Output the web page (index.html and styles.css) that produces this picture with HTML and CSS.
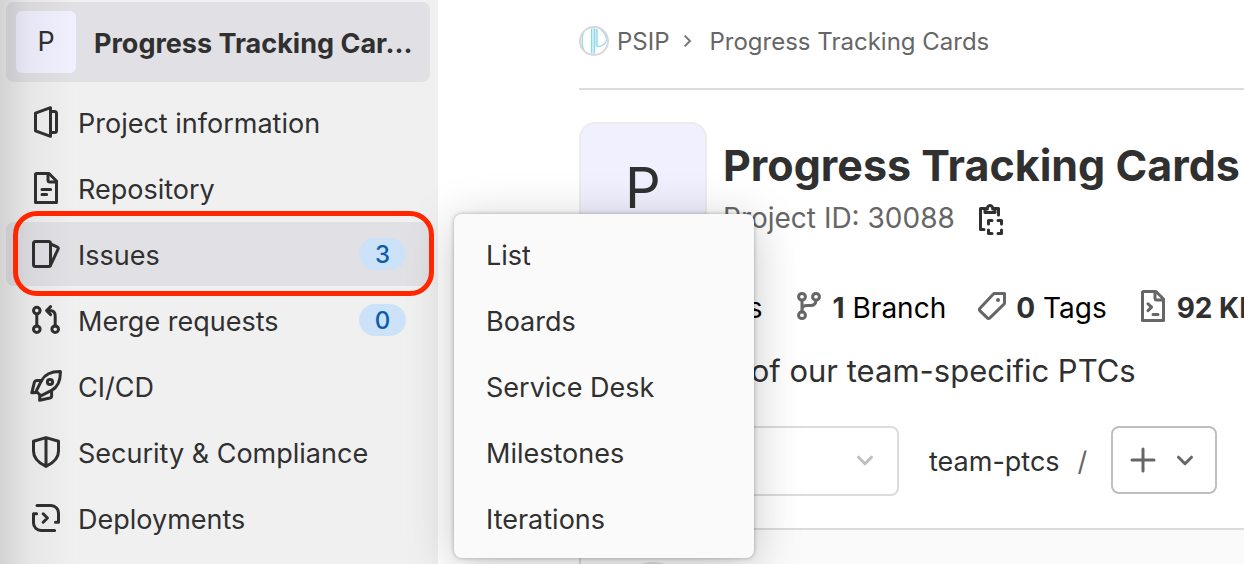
FILE: index.html
```html
<!DOCTYPE html>
<html lang="en">
<head>
<meta charset="utf-8">
<title>Progress Tracking Cards</title>
<link rel="stylesheet" href="styles.css">
</head>
<body>
<div class="layout">
  <aside class="sidebar">
    <a class="context" href="#">
      <span class="context-avatar">P</span>
      <span class="context-name">Progress Tracking Car...</span>
    </a>
    <nav>
      <ul class="nav">
        <li class="nav-item"><a class="nav-link" href="#">
          <svg class="icon" viewBox="0 0 16 16"><path d="M2.75 3.6 10.25.85v14.3L2.75 12.4z"/><path d="M10.25 2.75h2a1 1 0 0 1 1 1v8.5a1 1 0 0 1-1 1h-2"/></svg>
          <span class="nav-text">Project information</span></a></li>
        <li class="nav-item"><a class="nav-link" href="#">
          <svg class="icon" viewBox="0 0 16 16"><path d="M2.75 1.25a.5.5 0 0 1 .5-.5H9.5l3.75 3.75v10.75H2.75z"/><path d="M9 1v3a1 1 0 0 0 1 1h3M6 8.75h4.3M6 11.25h2.3"/></svg>
          <span class="nav-text">Repository</span></a></li>
        <li class="nav-item active"><a class="nav-link" href="#">
          <svg class="icon" viewBox="0 0 16 16"><rect x="1.75" y="1.75" width="8.5" height="12.5" rx="1"/><path d="m10.5 3.1 3.3 1.5q.5.3.3.8L10.3 13.6"/></svg>
          <span class="nav-text">Issues</span><span class="badge">3</span></a>
          <span class="highlight"></span>
          <ul class="flyout">
            <li><a class="flyout-link" href="#">List</a></li>
            <li><a class="flyout-link" href="#">Boards</a></li>
            <li><a class="flyout-link" href="#">Service Desk</a></li>
            <li><a class="flyout-link" href="#">Milestones</a></li>
            <li><a class="flyout-link" href="#">Iterations</a></li>
          </ul>
        </li>
        <li class="nav-item"><a class="nav-link" href="#">
          <svg class="icon" viewBox="0 0 16 16"><circle cx="3.4" cy="3.3" r="1.65"/><circle cx="3.4" cy="12.6" r="1.65"/><circle cx="12.6" cy="12.6" r="1.65"/><path d="M3.4 5v6M12.6 11V6q0-2.75-2.75-2.75H8.6M10.3 1.3l-2 2 2 2"/></svg>
          <span class="nav-text">Merge requests</span><span class="badge">0</span></a></li>
        <li class="nav-item"><a class="nav-link" href="#">
          <svg class="icon" viewBox="0 0 16 16"><path d="M15.2.8C10.3.7 7.6 2 5.8 5.2L3.1 10.6l2.3 2.3 5.4-2.7C14 8.4 15.3 5.7 15.2.8z"/><path d="M5.8 5.2H3.3q-.8 0-1.1.9L.9 11.4l2.4-.2M10.8 10.2v2.8q0 .8-.8 1L4.8 15.1l.1-2.5"/><circle cx="10" cy="6" r="1.3"/></svg>
          <span class="nav-text">CI/CD</span></a></li>
        <li class="nav-item"><a class="nav-link" href="#">
          <svg class="icon" viewBox="0 0 16 16"><path d="m8 .8 6.25 1.8v5C14.25 11 12 13.3 8 15.2 4 13.3 1.75 11 1.75 7.6v-5zM8 1v14"/></svg>
          <span class="nav-text">Security &amp; Compliance</span></a></li>
        <li class="nav-item"><a class="nav-link" href="#">
          <svg class="icon" viewBox="0 0 16 16"><path d="M3.5 1.75h7a3.75 3.75 0 0 1 3.75 3.75v4.6h-1.5M3.3 5.9H1.75v4.6a3.75 3.75 0 0 0 3.75 3.75h6.8M6.6 5.9 8.7 8l-2.1 2.1"/></svg>
          <span class="nav-text">Deployments</span></a></li>
      </ul>
    </nav>
  </aside>

  <main class="content">
    <nav class="breadcrumbs" aria-label="Breadcrumbs">
      <svg class="group-logo" viewBox="0 0 30 30"><path class="logo-soft" d="M14 2v26M17 3v17"/><path class="logo-line" d="M12.5 2.5v25M15.5 2.5v25M18 3v17.500c5 0 9-2.500 9.500-7M5 6C2.500 10 2.500 20 5 24M22 4c3 2 5 5 5.500 9"/><circle class="logo-ring" cx="15" cy="15" r="14"/></svg>
      <a class="crumb" href="#">PSIP</a>
      <svg class="crumb-sep" viewBox="0 0 12 12"><path d="m3.5 2 4 4-4 4"/></svg>
      <a class="crumb" href="#">Progress Tracking Cards</a>
    </nav>

    <header class="project">
      <span class="project-avatar">P</span>
      <div class="project-heading">
        <h1 class="project-title">Progress Tracking Cards</h1>
        <div class="project-id">Project ID: 30088
          <button class="copy" type="button" aria-label="Copy project ID">
            <svg class="icon" viewBox="0 0 16 16"><path d="M5 2.75H2.75v10.5H4.5M9.500 2.75h2.250V6"/><path d="M5 4.75V3h1.200a1.350 1.350 0 1 1 2.600 0H10v1.750z"/><path d="M6.75 10.500V8.750H8.500M11.500 8.750h1.750v1.750M13.250 13.500v1.750H11.500M8.500 15.250H6.750V13.500"/></svg>
          </button>
        </div>
      </div>
    </header>

    <div class="stats">
      <a class="stat" href="#"><svg class="icon" viewBox="0 0 16 16"><circle cx="8" cy="8" r="3"/><path d="M0 8h5M11 8h5"/></svg><span class="stat-text"><strong>4</strong> Commits</span></a>
      <a class="stat" href="#"><svg class="icon" viewBox="0 0 16 16"><circle cx="4.5" cy="3.4" r="1.7"/><circle cx="11.5" cy="3.4" r="1.7"/><circle cx="4.5" cy="12.6" r="1.7"/><path d="M4.5 5v6M11.5 5q0 2.8-2.8 2.8H7q-2.2 0-2.5 1.7"/></svg><span class="stat-text"><strong>1</strong> Branch</span></a>
      <a class="stat" href="#"><svg class="icon" viewBox="0 0 16 16"><path d="M9.3 1.75h4.95v4.7q0 .4-.3.7l-7 6.8q-.7.6-1.3 0L2 10.4q-.6-.7 0-1.3l6.6-7q.3-.35.7-.35z"/><circle class="dot" cx="11" cy="5" r="1"/></svg><span class="stat-text"><strong>0</strong> Tags</span></a>
      <a class="stat" href="#"><svg class="icon" viewBox="0 0 16 16"><path d="M2.75 1.25a.5.5 0 0 1 .5-.5H9.5l3.75 3.75v10.75H2.75z"/><path d="M9 1v3a1 1 0 0 0 1 1h3M5.5 6.9l1.8 1.7-1.8 1.7M8 12.25h2.5"/></svg><span class="stat-text"><strong>92 KB</strong></span></a>
    </div>

    <p class="description">Collections of our team-specific PTCs</p>

    <div class="tree-controls">
      <label class="ref-picker">
        <select class="ref-select" aria-label="Branch"><option>main</option></select>
        <svg class="ref-chevron" viewBox="0 0 16 16"><path d="M4.75 6.6 8 9.85l3.25-3.25"/></svg>
      </label>
      <div class="path"><a href="#">team-ptcs</a><span class="path-slash">/</span></div>
      <button class="add" type="button" aria-label="Add to tree">
        <svg class="icon" viewBox="0 0 16 16"><path d="M8 2.5v11M2.5 8h11"/></svg>
        <svg class="icon" viewBox="0 0 16 16"><path d="M4.75 6.6 8 9.85l3.25-3.25"/></svg>
      </button>
    </div>

    <section class="commit"><span class="commit-avatar"></span></section>
  </main>
</div>
</body>
</html>
```
FILE: styles.css
```css
* { box-sizing: border-box; }

body {
  margin: 0;
  background: #fff;
  color: #303030;
  font-family: Inter, "Liberation Sans", sans-serif;
  font-size: 27px;
  line-height: 32px;
}

a { color: inherit; text-decoration: none; }
ul { margin: 0; padding: 0; list-style: none; }
button { padding: 0; color: inherit; font: inherit; }

.icon {
  flex: none;
  width: 32px;
  height: 32px;
  fill: none;
  stroke: currentColor;
  stroke-width: 1.5;
  stroke-linecap: round;
  stroke-linejoin: round;
}

.layout {
  display: flex;
  height: 100vh;
  overflow: hidden;
}

/* Sidebar */
.sidebar {
  position: relative;
  z-index: 1;
  flex: none;
  width: 438px;
  padding: 2px 8px 0 6px;
  background: #f0f0f0;
}

.sidebar::before {
  content: "";
  position: absolute;
  inset: 0 auto 0 0;
  z-index: 1;
  width: 76px;
  background: linear-gradient(to right, rgba(0, 0, 0, 0.12), rgba(0, 0, 0, 0.04) 40%, rgba(0, 0, 0, 0));
  pointer-events: none;
}

.context {
  display: flex;
  align-items: center;
  gap: 18px;
  height: 80px;
  margin-bottom: 8px;
  padding-left: 10px;
  border-radius: 8px;
  background: #e1e0e5;
  font-weight: 700;
  white-space: nowrap;
}

.context-name { padding-top: 4px; }

.context-avatar {
  flex: none;
  width: 60px;
  border-radius: 6px;
  background: #f1f0ff;
  font-weight: 400;
  line-height: 62px;
  text-align: center;
}

.nav {
  display: flex;
  flex-direction: column;
  gap: 2px;
}

.nav-item {
  position: relative;
  border-radius: 8px;
}

.nav-item.active { background: #e1e0e5; }

.nav-link {
  display: flex;
  align-items: center;
  gap: 16px;
  height: 64px;
  padding: 0 24px;
  white-space: nowrap;
}

.nav-text {
  flex: 1;
  padding-top: 4px;
}

.badge {
  width: 47px;
  height: 32px;
  border-radius: 16px;
  background: #cbe2f9;
  color: #0b5cad;
  font-size: 24px;
  font-weight: 500;
  line-height: 34px;
  text-align: center;
}

.highlight {
  position: absolute;
  inset: -11px -4px -10px 7px;
  z-index: 2;
  border: 5px solid #ff2600;
  border-radius: 24px;
  pointer-events: none;
}

.flyout {
  position: absolute;
  top: -8px;
  left: 448px;
  display: flex;
  flex-direction: column;
  gap: 2px;
  width: 300px;
  padding: 8px 0;
  border-radius: 8px;
  background: #fafafa;
  box-shadow: 0 0 4px rgba(0, 0, 0, 0.3), 0 8px 48px rgba(0, 0, 0, 0.22);
}

.flyout-link {
  display: block;
  height: 64px;
  padding: 18px 32px 0;
}

/* Project page */
.content {
  flex: 1;
  min-width: 0;
  padding-left: 141px;
  white-space: nowrap;
}

.breadcrumbs {
  display: flex;
  align-items: center;
  gap: 8px;
  height: 90px;
  padding-bottom: 6px;
  border-bottom: 2px solid #dcdcde;
  color: #666;
  font-size: 24px;
}

.crumb { padding-top: 2px; }

.group-logo { width: 30px; height: 30px; fill: none; }
.logo-ring { stroke: #d8d8d8; stroke-width: 2; }
.logo-soft { stroke: #d3f0f7; stroke-width: 3; }
.logo-line { stroke: #8ed8ea; stroke-width: 1.2; }

.crumb-sep {
  width: 16px;
  height: 16px;
  margin: 0 6px 0 2px;
  fill: none;
  stroke: #777;
  stroke-width: 1.5;
}

.project {
  display: flex;
  gap: 16px;
  margin-top: 32px;
}

.project-avatar {
  flex: none;
  width: 128px;
  height: 128px;
  border: 2px solid #ececec;
  border-radius: 16px;
  background: #f1f0ff;
  font-size: 56px;
  line-height: 128px;
  text-align: center;
}

.project-heading { padding-top: 15px; }

.project-title {
  margin: 0;
  font-size: 43px;
  font-weight: 700;
  line-height: 56px;
}

.project-id {
  display: flex;
  align-items: center;
  gap: 20px;
  margin-top: 8px;
  color: #666;
  font-size: 28px;
}

.copy {
  display: flex;
  padding-top: 2px;
  border: 0;
  background: none;
  color: #303030;
}

.stats {
  display: flex;
  gap: 30px;
  margin-top: 40px;
  font-size: 28px;
}

.stat {
  display: flex;
  align-items: center;
  gap: 8px;
  height: 32px;
  color: #000;
}

.stat-text { padding-top: 4px; }
.stat .icon { color: #666; }
.stat strong { color: #303030; font-weight: 700; }
.dot { fill: currentColor; stroke: none; }

.description {
  margin: 29px 0 0;
  font-size: 31px;
  line-height: 40px;
}

.tree-controls {
  display: flex;
  align-items: flex-start;
  margin-top: 35px;
}

.ref-picker {
  position: relative;
  flex: none;
  width: 320px;
}

.ref-select {
  display: block;
  width: 100%;
  height: 70px;
  padding: 0 24px;
  border: 2px solid #dcdcde;
  border-radius: 8px;
  appearance: none;
  background: #fff;
  color: #303030;
  font: inherit;
}

.ref-chevron {
  position: absolute;
  top: 18px;
  right: 18px;
  width: 32px;
  height: 32px;
  fill: none;
  stroke: #bfbfbf;
  stroke-width: 1.5;
  stroke-linecap: round;
}

.path {
  display: flex;
  gap: 18px;
  height: 70px;
  margin: 0 24px 0 30px;
  line-height: 72px;
}

.path-slash { color: #666; }

.add {
  display: flex;
  align-items: center;
  justify-content: center;
  gap: 10px;
  flex: none;
  width: 106px;
  height: 68px;
  border: 2px solid #bfbfbf;
  border-radius: 8px;
  background: #fff;
  color: #666;
}

.commit {
  margin-top: 32px;
  padding: 32px;
  border: 2px solid #dcdcde;
  border-right: 0;
  background: #fafafa;
}

.commit-avatar {
  display: block;
  width: 80px;
  height: 80px;
  border-radius: 50%;
  background: #dcdcde;
}
```
